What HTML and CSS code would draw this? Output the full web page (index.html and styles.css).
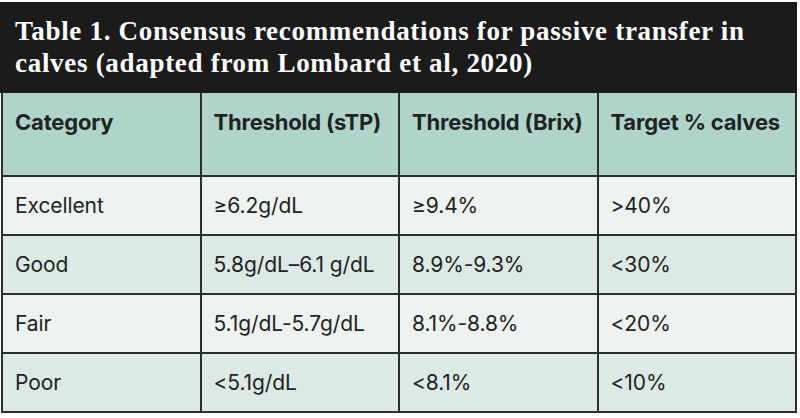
FILE: index.html
```html
<!DOCTYPE html>
<html lang="en">
<head>
<meta charset="utf-8">
<title>Table 1</title>
<link rel="stylesheet" href="styles.css">
</head>
<body>
<div class="card">
  <div class="caption">Table 1. Consensus recommendations for passive transfer in<br>calves (adapted from Lombard et al, 2020)</div>
  <table class="data">
    <thead>
      <tr>
        <th>Category</th>
        <th>Threshold (sTP)</th>
        <th>Threshold (Brix)</th>
        <th>Target % calves</th>
      </tr>
    </thead>
    <tbody>
      <tr class="light">
        <td>Excellent</td>
        <td>≥6.2g/dL</td>
        <td>≥9.4%</td>
        <td>&gt;40%</td>
      </tr>
      <tr class="tint">
        <td>Good</td>
        <td>5.8g/dL–6.1 g/dL</td>
        <td>8.9%-9.3%</td>
        <td>&lt;30%</td>
      </tr>
      <tr class="light">
        <td>Fair</td>
        <td>5.1g/dL-5.7g/dL</td>
        <td>8.1%-8.8%</td>
        <td>&lt;20%</td>
      </tr>
      <tr class="tint">
        <td>Poor</td>
        <td>&lt;5.1g/dL</td>
        <td>&lt;8.1%</td>
        <td>&lt;10%</td>
      </tr>
    </tbody>
  </table>
</div>
</body>
</html>
```
FILE: styles.css
```css
html, body {
  margin: 0;
  padding: 0;
  background: #ffffff;
}

.card {
  width: 797px;
  margin: 2px 0 0 0;
}

.caption {
  background: #1b1b1b;
  color: #ffffff;
  font-family: "Liberation Serif", "DejaVu Serif", serif;
  font-weight: bold;
  font-size: 27px;
  line-height: 32px;
  letter-spacing: 0.7px;
  padding: 13px 15px 14px 15px;
  white-space: nowrap;
}

.data {
  width: 796px;
  margin-left: 1px;
  border-collapse: collapse;
  table-layout: fixed;
  font-family: "Inter", "DejaVu Sans", sans-serif;
  color: #1d2423;
}

.data th,
.data td {
  border: 2px solid #2b2f2e;
  text-align: left;
  padding: 0 8px 0 12px;
}

.data thead tr:first-child th {
  border-top: none;
}

.data th {
  background: #b0d4ca;
  height: 66px;
  vertical-align: top;
  padding-top: 16px;
  font-size: 22px;
  line-height: 26px;
  font-weight: 700;
  letter-spacing: -0.2px;
}

.data td {
  height: 57px;
  vertical-align: middle;
  font-size: 21px;
  line-height: 24px;
  font-weight: 400;
  letter-spacing: -0.1px;
}

.data tr.light td {
  background: #eef3f1;
}

.data tr.tint td {
  background: #dce9e5;
}
```
